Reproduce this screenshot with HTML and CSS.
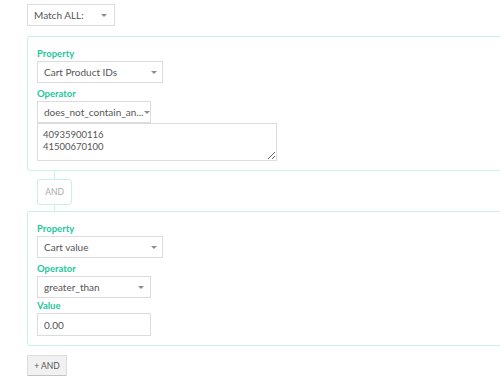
FILE: index.html
```html
<!DOCTYPE html>
<html lang="en">
<head>
    <meta charset="UTF-8">
    <meta name="viewport" content="width=device-width, initial-scale=1.0">
    <title>Rule Builder</title>
    <link rel="stylesheet" href="styles.css">
</head>
<body>
    <div class="builder">
        <div class="select match-select">Match ALL:<span class="caret"></span></div>

        <div class="rule-card">
            <label class="field-label">Property</label>
            <div class="select w-wide">Cart Product IDs<span class="caret"></span></div>
            <label class="field-label">Operator</label>
            <div class="select w-narrow tight">does_not_contain_an...<span class="caret near"></span></div>
            <textarea class="values">40935900116
41500670100</textarea>
        </div>

        <div class="joiner">
            <div class="joiner-line"></div>
            <span class="and-tag">AND</span>
            <div class="joiner-line short"></div>
        </div>

        <div class="rule-card">
            <label class="field-label">Property</label>
            <div class="select w-wide">Cart value<span class="caret"></span></div>
            <label class="field-label">Operator</label>
            <div class="select w-narrow tight">greater_than<span class="caret"></span></div>
            <label class="field-label">Value</label>
            <input class="text-input w-narrow" type="text" value="0.00">
        </div>

        <button class="add-and">+ AND</button>
    </div>
</body>
</html>
```

FILE: styles.css
```css
html, body {
    margin: 0;
    overflow: hidden;
}
body {
    font-family: Lato, "Open Sans", sans-serif;
    font-size: 10px;
    color: #555;
    background: #fff;
}
.builder {
    padding: 4px 0 0 27px;
}
.select {
    display: flex;
    align-items: center;
    box-sizing: border-box;
    height: 22px;
    padding: 0 6px;
    border: 1px solid #dcdcdc;
    background: #fff;
    color: #555;
    white-space: nowrap;
    overflow: hidden;
}
.select .caret {
    flex: none;
    margin-left: auto;
    width: 0;
    height: 0;
    border-left: 3px solid transparent;
    border-right: 3px solid transparent;
    border-top: 3px solid #8c8c8c;
}
.select .caret.near {
    margin-left: 1px;
}
.match-select {
    width: 88px;
    padding-right: 7px;
}
.w-wide {
    width: 126px;
    padding-right: 5px;
}
.w-narrow {
    width: 114px;
}
.rule-card {
    box-sizing: border-box;
    width: 520px;
    margin-top: 10px;
    padding: 10px 10px 9px 9px;
    border: 1px solid #c6f3e6;
    border-radius: 3px;
}
.field-label {
    display: block;
    font-size: 9.5px;
    font-weight: bold;
    color: #22c89c;
    line-height: 13px;
    margin-bottom: 1px;
}
.rule-card .select {
    margin-bottom: 4px;
}
.rule-card .select.tight {
    margin-bottom: 1px;
}
.rule-card .values {
    margin-top: -1px;
}
.values {
    display: block;
    box-sizing: border-box;
    width: 240px;
    height: 38px;
    margin: 0;
    padding: 5px 5px;
    border: 1px solid #dcdcdc;
    font-family: Lato, "Open Sans", sans-serif;
    font-size: 9.5px;
    line-height: 12px;
    color: #555;
}
.text-input {
    display: block;
    box-sizing: border-box;
    height: 23px;
    margin: 0;
    padding: 0 6px;
    border: 1px solid #dcdcdc;
    font-family: Lato, "Open Sans", sans-serif;
    font-size: 10px;
    color: #555;
}
.joiner {
    display: flex;
    flex-direction: column;
    align-items: flex-start;
    padding-left: 10px;
}
.joiner-line {
    width: 1px;
    height: 8px;
    margin-left: 17px;
    background: #c6f3e6;
}
.joiner-line.short {
    height: 6px;
}
.joiner + .rule-card {
    margin-top: 0;
}
.and-tag {
    box-sizing: border-box;
    width: 35px;
    height: 26px;
    line-height: 24px;
    text-align: center;
    border: 1px solid #c6f3e6;
    border-radius: 3px;
    color: #aaa;
    font-size: 8.5px;
}
.add-and {
    display: block;
    margin-top: 9px;
    box-sizing: border-box;
    width: 40px;
    height: 21px;
    padding: 0;
    border: 1px solid #dcdcdc;
    border-bottom-color: #c4c4c4;
    border-radius: 1px;
    background: #f1f1f1;
    color: #555;
    font-family: Lato, "Open Sans", sans-serif;
    font-size: 8.5px;
}
```
